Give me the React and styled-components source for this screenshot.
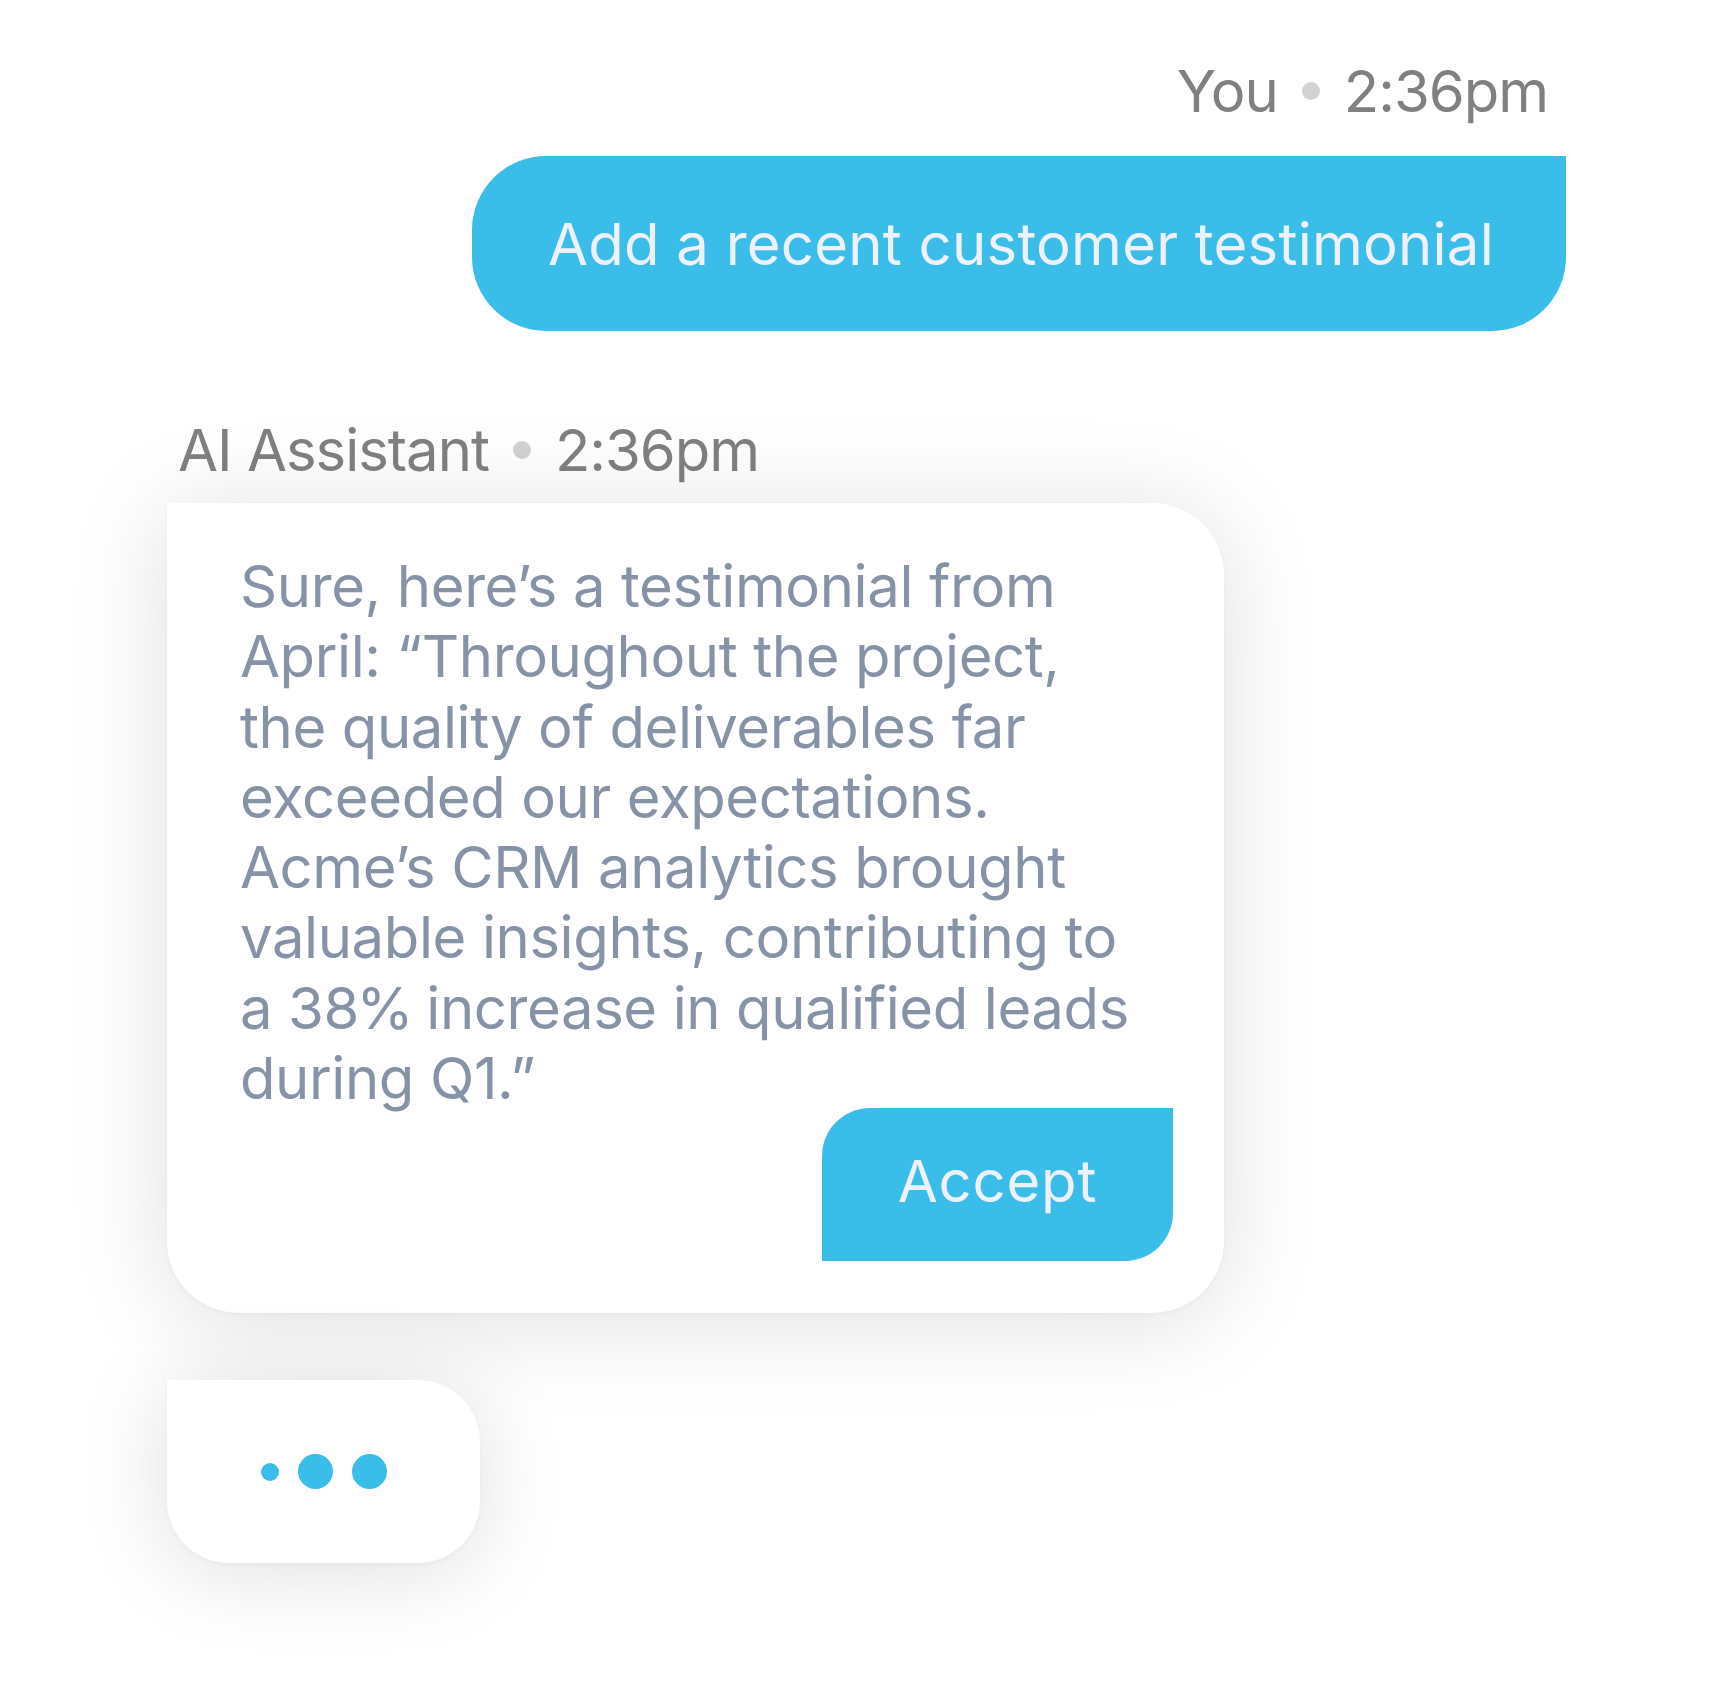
import React from "react";
import styled, { createGlobalStyle } from "styled-components";

const GlobalStyle = createGlobalStyle`
  html, body {
    margin: 0;
    padding: 0;
    background: #ffffff;
  }
  body {
    font-family: Inter, "Liberation Sans", sans-serif;
    font-feature-settings: "calt" 0;
    -webkit-font-smoothing: antialiased;
  }
`;

const BLUE = "#3abde8";
const ON_BLUE = "#eef0fb";

const Page = styled.div`
  width: 1722px;
  min-height: 1687px;
  box-sizing: border-box;
  padding-top: 56px;
  display: flex;
  flex-direction: column;
  background: #ffffff;
`;

const UserBlock = styled.section`
  display: flex;
  flex-direction: column;
  align-items: flex-end;
  margin-right: 156px;
  gap: 30px;
`;

const AssistantBlock = styled.section`
  display: flex;
  flex-direction: column;
  align-items: flex-start;
  margin-left: 167px;
  margin-top: 84px;
`;

const Meta = styled.div`
  display: flex;
  align-items: center;
  gap: 24px;
  font-size: 58px;
  line-height: 70px;
  height: 70px;
  color: #808080;
  letter-spacing: -1px;
  padding: ${(p) => (p.$side === "right" ? "0 18px 0 0" : "0 0 0 11px")};
  margin-bottom: ${(p) => (p.$side === "right" ? "0" : "18px")};
  white-space: nowrap;
  font-feature-settings: "calt" 0;
`;

const MetaDot = styled.span`
  width: 18px;
  height: 18px;
  border-radius: 50%;
  background: #d2d2d2;
  flex: none;
`;

const UserBubble = styled.div`
  height: 175px;
  box-sizing: border-box;
  padding: 0 72px 0 76px;
  display: flex;
  align-items: center;
  background: ${BLUE};
  color: ${ON_BLUE};
  border-radius: 74px 0 74px 74px;
  font-size: 58px;
  letter-spacing: 0.25px;
  white-space: nowrap;
`;

const AnswerCard = styled.div`
  width: 1057px;
  box-sizing: border-box;
  padding: 48px 51px 52px 73px;
  background: #ffffff;
  border-radius: 0 72px 72px 72px;
  box-shadow: 0 8px 100px rgba(0, 0, 0, 0.13), 0 2px 4px rgba(0, 0, 0, 0.03);
  display: flex;
  flex-direction: column;
`;

const AnswerText = styled.p`
  margin: 0;
  font-size: 58px;
  line-height: 70.3px;
  color: #8693a6;
  white-space: nowrap;
  letter-spacing: -0.4px;
`;

const ActionRow = styled.div`
  display: flex;
  justify-content: flex-end;
  margin-top: -5px;
`;

const AcceptButton = styled.button`
  width: 351px;
  height: 153px;
  border: none;
  padding: 0 0 8px 0;
  background: ${BLUE};
  color: ${ON_BLUE};
  border-radius: 48px 0 48px 0;
  font-family: Inter, "Liberation Sans", sans-serif;
  font-size: 58px;
  letter-spacing: 0.8px;
  display: flex;
  align-items: center;
  justify-content: center;
  cursor: pointer;
`;

const TypingCard = styled.div`
  margin-top: 67px;
  width: 313px;
  height: 183px;
  background: #ffffff;
  border-radius: 0 62px 62px 62px;
  box-shadow: 0 8px 90px rgba(0, 0, 0, 0.13), 0 2px 4px rgba(0, 0, 0, 0.03);
  display: flex;
  align-items: center;
  justify-content: center;
  gap: 19px;
`;

const TypingDot = styled.span`
  width: ${(p) => p.$size}px;
  height: ${(p) => p.$size}px;
  border-radius: 50%;
  background: ${BLUE};
  flex: none;
`;

const Percent = styled.span`
  letter-spacing: -3px;
`;

const lines = [
  "Sure, here\u2019s a testimonial from",
  "April: \u201cThroughout the project,",
  "the quality of deliverables far",
  "exceeded our expectations.",
  "Acme\u2019s CRM analytics brought",
  "valuable insights, contributing to",
  null,
  "during Q1.\u201d",
];

export default function App() {
  return (
    <>
      <GlobalStyle />
      <Page>
        <UserBlock>
          <Meta $side="right">
            <span>You</span>
            <MetaDot />
            <span>2:36pm</span>
          </Meta>
          <UserBubble>Add a recent customer testimonial</UserBubble>
        </UserBlock>

        <AssistantBlock>
          <Meta $side="left">
            <span>AI Assistant</span>
            <MetaDot />
            <span>2:36pm</span>
          </Meta>
          <AnswerCard>
            <AnswerText>
              {lines.map((l, i) => (
                <React.Fragment key={i}>
                  {l === null ? (
                    <>
                      a 3<Percent>8%</Percent> increase in qualified leads
                    </>
                  ) : (
                    l
                  )}
                  {i < lines.length - 1 && <br />}
                </React.Fragment>
              ))}
            </AnswerText>
            <ActionRow>
              <AcceptButton>Accept</AcceptButton>
            </ActionRow>
          </AnswerCard>
          <TypingCard>
            <TypingDot $size={18} />
            <TypingDot $size={35} />
            <TypingDot $size={35} />
          </TypingCard>
        </AssistantBlock>
      </Page>
    </>
  );
}
